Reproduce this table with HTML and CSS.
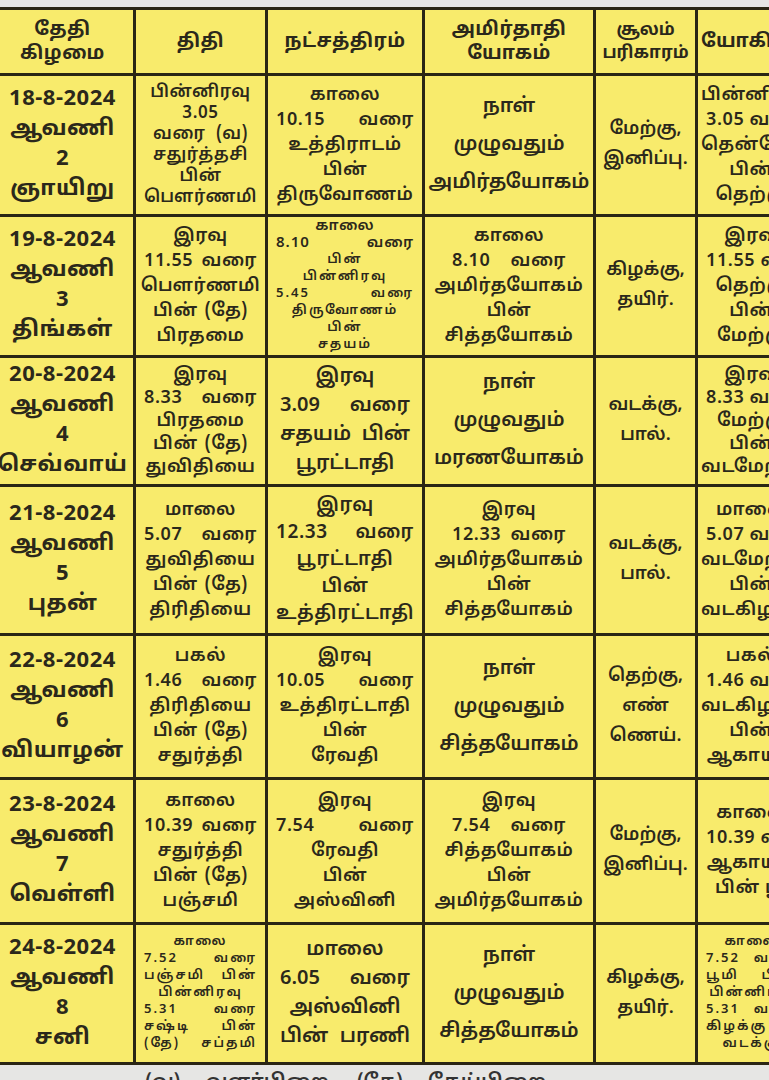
FILE: index.html
```html
<!DOCTYPE html>
<html lang="ta">
<head>
<meta charset="utf-8">
<title>பஞ்சாங்கம்</title>
<link rel="stylesheet" href="styles.css">
</head>
<body>
<div class="page">
<table class="cal">
<colgroup>
<col class="c1"><col class="c2"><col class="c3"><col class="c4"><col class="c5"><col class="c6">
</colgroup>
<tr class="head">
<th>தேதி<br>கிழமை</th><th>திதி</th><th>நட்சத்திரம்</th><th>அமிர்தாதி<br>யோகம்</th><th class="hs">சூலம்<br>பரிகாரம்</th><th>யோகினி</th>
</tr>
<tr class="r1">
<td class="d"><span>18-8-2024</span><span>ஆவணி</span><span>2</span><span>ஞாயிறு</span></td>
<td class="t t6"><span>பின்னிரவு</span><span>3.05</span><span class="j jw">வரை (வ)</span><span>சதுர்த்தசி</span><span>பின்</span><span>பௌர்ணமி</span></td>
<td class="t"><span>காலை</span><span class="j">10.15 வரை</span><span>உத்திராடம்</span><span>பின்</span><span>திருவோணம்</span></td>
<td class="w"><span>நாள்</span><span>முழுவதும்</span><span>அமிர்தயோகம்</span></td>
<td class="p"><span>மேற்கு,</span><span>இனிப்பு.</span></td>
<td class="t"><span>பின்னிரவு</span><span class="j">3.05 வரை</span><span>தென்மேற்கு</span><span>பின்</span><span>தெற்கு</span></td>
</tr>
<tr class="r2">
<td class="d"><span>19-8-2024</span><span>ஆவணி</span><span>3</span><span>திங்கள்</span></td>
<td class="t"><span>இரவு</span><span class="j">11.55 வரை</span><span>பௌர்ணமி</span><span class="j jw">பின் (தே)</span><span>பிரதமை</span></td>
<td class="s"><span class="sb">காலை</span><span class="j sb">8.10 வரை</span><span>பின்</span><span>பின்னிரவு</span><span class="j">5.45 வரை</span><span>திருவோணம்</span><span>பின்</span><span>சதயம்</span></td>
<td class="t k4"><span>காலை</span><span class="j">8.10 வரை</span><span>அமிர்தயோகம்</span><span>பின்</span><span>சித்தயோகம்</span></td>
<td class="p"><span>கிழக்கு,</span><span>தயிர்.</span></td>
<td class="t"><span>இரவு</span><span class="j">11.55 வரை</span><span>தெற்கு</span><span>பின்</span><span>மேற்கு</span></td>
</tr>
<tr class="r3">
<td class="d"><span>20-8-2024</span><span>ஆவணி</span><span>4</span><span>செவ்வாய்</span></td>
<td class="t t5"><span>இரவு</span><span class="j">8.33 வரை</span><span>பிரதமை</span><span class="j jw">பின் (தே)</span><span>துவிதியை</span></td>
<td class="w w4"><span>இரவு</span><span class="j">3.09 வரை</span><span class="j">சதயம் பின்</span><span>பூரட்டாதி</span></td>
<td class="w"><span>நாள்</span><span>முழுவதும்</span><span>மரணயோகம்</span></td>
<td class="p"><span>வடக்கு,</span><span>பால்.</span></td>
<td class="t t5"><span>இரவு</span><span class="j">8.33 வரை</span><span>மேற்கு</span><span>பின்</span><span>வடமேற்கு</span></td>
</tr>
<tr class="r4">
<td class="d"><span>21-8-2024</span><span>ஆவணி</span><span>5</span><span>புதன்</span></td>
<td class="t"><span>மாலை</span><span class="j">5.07 வரை</span><span>துவிதியை</span><span class="j jw">பின் (தே)</span><span>திரிதியை</span></td>
<td class="t t28"><span>இரவு</span><span class="j">12.33 வரை</span><span>பூரட்டாதி</span><span>பின்</span><span>உத்திரட்டாதி</span></td>
<td class="t k4"><span>இரவு</span><span class="j">12.33 வரை</span><span>அமிர்தயோகம்</span><span>பின்</span><span>சித்தயோகம்</span></td>
<td class="p"><span>வடக்கு,</span><span>பால்.</span></td>
<td class="t"><span>மாலை</span><span class="j">5.07 வரை</span><span>வடமேற்கு</span><span>பின்</span><span>வடகிழக்கு</span></td>
</tr>
<tr class="r5">
<td class="d"><span>22-8-2024</span><span>ஆவணி</span><span>6</span><span>வியாழன்</span></td>
<td class="t"><span>பகல்</span><span class="j">1.46 வரை</span><span>திரிதியை</span><span class="j jw">பின் (தே)</span><span>சதுர்த்தி</span></td>
<td class="t"><span>இரவு</span><span class="j">10.05 வரை</span><span>உத்திரட்டாதி</span><span>பின்</span><span>ரேவதி</span></td>
<td class="w"><span>நாள்</span><span>முழுவதும்</span><span>சித்தயோகம்</span></td>
<td class="p"><span>தெற்கு,</span><span>எண்</span><span>ணெய்.</span></td>
<td class="t"><span>பகல்</span><span class="j">1.46 வரை</span><span>வடகிழக்கு</span><span>பின்</span><span>ஆகாயம்</span></td>
</tr>
<tr class="r6">
<td class="d"><span>23-8-2024</span><span>ஆவணி</span><span>7</span><span>வெள்ளி</span></td>
<td class="t"><span>காலை</span><span class="j">10.39 வரை</span><span>சதுர்த்தி</span><span class="j jw">பின் (தே)</span><span>பஞ்சமி</span></td>
<td class="t"><span>இரவு</span><span class="j">7.54 வரை</span><span>ரேவதி</span><span>பின்</span><span>அஸ்வினி</span></td>
<td class="t k4"><span>இரவு</span><span class="j">7.54 வரை</span><span>சித்தயோகம்</span><span>பின்</span><span>அமிர்தயோகம்</span></td>
<td class="p"><span>மேற்கு,</span><span>இனிப்பு.</span></td>
<td class="t"><span>காலை</span><span class="j">10.39 வரை</span><span>ஆகாயம்</span><span class="j jw">பின் பூமி</span></td>
</tr>
<tr class="r7">
<td class="d"><span>24-8-2024</span><span>ஆவணி</span><span>8</span><span>சனி</span></td>
<td class="s"><span>காலை</span><span class="j">7.52 வரை</span><span class="j">பஞ்சமி பின்</span><span>பின்னிரவு</span><span class="j">5.31 வரை</span><span class="j">சஷ்டி பின்</span><span class="j">(தே) சப்தமி</span></td>
<td class="w w4"><span>மாலை</span><span class="j">6.05 வரை</span><span>அஸ்வினி</span><span class="j">பின் பரணி</span></td>
<td class="w"><span>நாள்</span><span>முழுவதும்</span><span>சித்தயோகம்</span></td>
<td class="p"><span>கிழக்கு,</span><span>தயிர்.</span></td>
<td class="s"><span>காலை</span><span class="j">7.52 வரை</span><span class="j">பூமி பின்</span><span>பின்னிரவு</span><span class="j">5.31 வரை</span><span class="j">கிழக்கு பின்</span><span>வடக்கு</span></td>
</tr>
</table>
<p class="note">(வ) - வளர்பிறை &nbsp; (தே) - தேய்பிறை</p>
</div>
</body>
</html>
```
FILE: styles.css
```css
html, body {
  margin: 0;
  padding: 0;
  background: #e6e6e4;
  overflow: hidden;
}
.page {
  width: 769px;
  height: 1080px;
  overflow: hidden;
  padding-top: 7px;
  box-sizing: border-box;
}
.cal {
  margin-left: -11px;
  border-collapse: collapse;
  table-layout: fixed;
  width: 816px;
  background: #f8eb6c;
  color: #2b281b;
  font-family: "Noto Sans Tamil", "Lohit Tamil", "Noto Sans", sans-serif;
}
.c1 { width: 144px; }
.c2 { width: 132px; }
.c3 { width: 157px; }
.c4 { width: 171px; }
.c5 { width: 102px; }
.c6 { width: 110px; }
.cal th, .cal td {
  border: 3px solid #2a2614;
  text-align: center;
  vertical-align: middle;
  padding: 0 3px;
  overflow: hidden;
  white-space: nowrap;
}
.cal td span {
  display: block;
}
.cal th {
  font-size: 19px;
  font-weight: 700;
  line-height: 24px;
  letter-spacing: 0.5px;
}
.cal th.hs {
  font-size: 17px;
  letter-spacing: 0;
  line-height: 23px;
}
.head { height: 66px; }
.r1 { height: 141px; }
.r2 { height: 141px; }
.r3 { height: 129px; }
.r4 { height: 149px; }
.r5 { height: 144px; }
.r6 { height: 145px; }
.r7 { height: 140px; }
.d {
  font-size: 22px;
  font-weight: 700;
  line-height: 30px;
  letter-spacing: 0.5px;
}
.t {
  font-size: 18px;
  font-weight: 600;
  line-height: 25px;
  letter-spacing: 0.6px;
}
.t6 { line-height: 21px; font-size: 17px; }
.t5 { line-height: 23px; }
.t28 { line-height: 27px; font-size: 19px; }
.w {
  font-size: 20px;
  font-weight: 600;
  line-height: 38px;
  padding: 0;
}
.cal td.w { padding: 0; }
.w4 { line-height: 29px; font-size: 20px; }
.p {
  font-size: 18px;
  font-weight: 600;
  line-height: 30px;
}
.s {
  font-size: 13px;
  font-weight: 600;
  line-height: 17px;
  letter-spacing: 2px;
}
.s .sb { font-size: 15px; letter-spacing: 1px; }
.cal td .j {
  text-align: justify;
  text-align-last: justify;
  margin: 0 5px;
}
.cal td .jw { margin: 0 14px; }
.cal td.k4 .j { margin: 0 24px; }
.cal td.w .j { margin: 0 12px; }
.note {
  margin: 6px 0 0 145px;
  font-family: "Noto Sans Tamil", "Lohit Tamil", "Noto Sans", sans-serif;
  font-size: 20px;
  font-weight: 600;
  color: #333;
  word-spacing: 4px;
}
```
